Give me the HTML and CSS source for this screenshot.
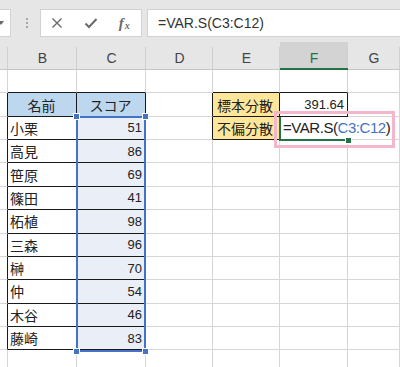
FILE: index.html
```html
<!DOCTYPE html>
<html lang="ja">
<head>
<meta charset="utf-8">
<title>VAR.S</title>
<link rel="stylesheet" href="styles.css">
</head>
<body>
<div class="app">
  <div class="toolbar">
    <div class="namebox"><span class="arrow"></span></div>
    <div class="grip"><i></i><i></i><i></i></div>
    <div class="fxbtns">
      <span class="btn"><svg width="12" height="12" viewBox="0 0 12 12"><path d="M1.5 1.5 L10.5 10.5 M10.5 1.5 L1.5 10.5" stroke="#6a6a6a" stroke-width="1.4" fill="none"/></svg></span>
      <span class="btn"><svg width="14" height="12" viewBox="0 0 14 12"><path d="M1.5 6.5 L5 10 L12.5 2" stroke="#6a6a6a" stroke-width="2" fill="none"/></svg></span>
      <span class="btn fx"><i>f</i><span class="sx">x</span></span>
    </div>
    <div class="formula">=VAR.S(C3:C12)</div>
  </div>
  <div class="sheet">
    <div class="grid cells">
      <div class="ch"></div><div class="ch">B</div><div class="ch">C</div><div class="ch">D</div><div class="ch">E</div><div class="ch sel">F</div><div class="ch">G</div>

      <div class="c"></div><div class="c bb"></div><div class="c bb"></div><div class="c"></div><div class="c bb"></div><div class="c bb"></div><div class="c"></div>

      <div class="c br"></div><div class="c br bb hd jp">名前</div><div class="c br bb hd jp">スコア</div><div class="c br"></div><div class="c br bb ye jp">標本分散</div><div class="c br bb num">391.64</div><div class="c"></div>

      <div class="c br"></div><div class="c br bb jp">小栗</div><div class="c br bb sl num">51</div><div class="c br"></div><div class="c br bb ye jp">不偏分散</div><div class="c br bb"></div><div class="c"></div>

      <div class="c br"></div><div class="c br bb jp">高見</div><div class="c br bb sl num">86</div><div class="c"></div><div class="c"></div><div class="c"></div><div class="c"></div>
      <div class="c br"></div><div class="c br bb jp">笹原</div><div class="c br bb sl num">69</div><div class="c"></div><div class="c"></div><div class="c"></div><div class="c"></div>
      <div class="c br"></div><div class="c br bb jp">篠田</div><div class="c br bb sl num">41</div><div class="c"></div><div class="c"></div><div class="c"></div><div class="c"></div>
      <div class="c br"></div><div class="c br bb jp">柘植</div><div class="c br bb sl num">98</div><div class="c"></div><div class="c"></div><div class="c"></div><div class="c"></div>
      <div class="c br"></div><div class="c br bb jp">三森</div><div class="c br bb sl num">96</div><div class="c"></div><div class="c"></div><div class="c"></div><div class="c"></div>
      <div class="c br"></div><div class="c br bb jp">榊</div><div class="c br bb sl num">70</div><div class="c"></div><div class="c"></div><div class="c"></div><div class="c"></div>
      <div class="c br"></div><div class="c br bb jp">仲</div><div class="c br bb sl num">54</div><div class="c"></div><div class="c"></div><div class="c"></div><div class="c"></div>
      <div class="c br"></div><div class="c br bb jp">木谷</div><div class="c br bb sl num">46</div><div class="c"></div><div class="c"></div><div class="c"></div><div class="c"></div>
      <div class="c br"></div><div class="c br bb jp">藤崎</div><div class="c br bb sl num">83</div><div class="c"></div><div class="c"></div><div class="c"></div><div class="c"></div>

      <div class="c"></div><div class="c"></div><div class="c"></div><div class="c"></div><div class="c"></div><div class="c"></div><div class="c"></div>
    </div>
    <div class="grid over">
      <div class="selbox"><span class="h tl"></span><span class="h tr"></span><span class="h bl"></span><span class="h brh"></span></div>
      <div class="edit">=VAR.S(<span class="ref">C3:C12</span>)<span class="caret"></span></div>
      <div class="active"><span class="fill"></span></div>
    </div>
    <div class="note"></div>
  </div>
</div>
</body>
</html>
```
FILE: styles.css
```css
html, body {
  margin: 0;
  padding: 0;
  background: #ffffff;
}
.app {
  width: 400px;
  height: 367px;
  overflow: hidden;
  font-family: "Liberation Sans", Arial, sans-serif;
  color: #222;
}
.toolbar {
  display: flex;
  align-items: flex-start;
  height: 42px;
  box-sizing: border-box;
  padding-top: 9px;
  background: #e6e6e6;
}
.namebox {
  width: 11px;
  height: 28px;
  box-sizing: border-box;
  background: #fff;
  border: 1px solid #d2d2d2;
  border-left: none;
  display: flex;
  align-items: center;
  justify-content: flex-end;
  padding-right: 6px;
}
.arrow {
  width: 0;
  height: 0;
  border-left: 3px solid transparent;
  border-right: 3px solid transparent;
  border-top: 4px solid #6a6a6a;
}
.grip {
  margin-left: 14px;
  width: 3px;
  height: 28px;
  display: flex;
  flex-direction: column;
  align-items: center;
  justify-content: center;
  gap: 2px;
}
.grip i {
  display: block;
  width: 2px;
  height: 2px;
  background: #a8a8a8;
}
.fxbtns {
  margin-left: 12px;
  width: 102px;
  height: 28px;
  box-sizing: border-box;
  background: #fff;
  border: 1px solid #d2d2d2;
  display: flex;
}
.btn {
  width: 34px;
  display: flex;
  align-items: center;
  justify-content: center;
}
.btn:first-child { margin-left: -1px; }
.fx {
  font-family: "Liberation Serif", serif;
  font-style: italic;
  color: #6a6a6a;
  font-size: 15px;
  font-weight: bold;
}
.fx .sx {
  font-size: 10px;
  margin-top: 5px;
  margin-left: 1px;
}
.formula {
  margin-left: 5px;
  flex: 1;
  height: 28px;
  box-sizing: border-box;
  background: #fff;
  border: 1px solid #d2d2d2;
  border-right: none;
  padding-left: 10px;
  font-size: 14px;
  line-height: 26px;
  color: #333;
}
.sheet {
  position: relative;
  display: grid;
}
.grid {
  grid-area: 1 / 1;
  display: grid;
  grid-template-columns: 8px 69px 69px 67px 67px 68px 1fr;
  grid-template-rows: 28px repeat(13, 23.36px);
}
.over {
  pointer-events: none;
  z-index: 2;
}
.ch {
  background: #e6e6e6 linear-gradient(#cfcfcf, #cfcfcf) no-repeat right bottom / 1px 22px;
  border-bottom: 1px solid #c6c6c6;
  display: flex;
  align-items: center;
  justify-content: center;
  padding-top: 5px;
  box-sizing: border-box;
  font-size: 14px;
  color: #444;
}
.ch.sel {
  background-color: #d3d3d3;
  color: #217346;
  border-bottom: 2px solid #217346;
}
.c {
  box-sizing: border-box;
  border-right: 1px solid #d6d6d6;
  border-bottom: 1px solid #d6d6d6;
  display: flex;
  align-items: center;
  padding: 0 3px;
  font-size: 13px;
  color: #222;
  white-space: nowrap;
}
.c.br { border-right-color: #1a1a1a; }
.c.bb { border-bottom-color: #1a1a1a; }
.jp {
  font-family: "Noto Sans CJK JP", sans-serif;
  font-size: 14px;
  padding-left: 2px;
}
.num { justify-content: flex-end; }
.hd {
  background: #bdd7ee;
  justify-content: center;
}
.ye {
  background: #ffe699;
  padding-left: 4px;
}
.sl { background: #e9eef7; }
.selbox {
  grid-column: 3;
  grid-row: 4 / 14;
  margin: -1px 0 -2px -1px;
  border: 2px solid #4472c4;
  position: relative;
}
.h {
  position: absolute;
  width: 5px;
  height: 5px;
  background: #4472c4;
  outline: 1px solid #ffffff;
}
.h.tl { left: -4px; top: -4px; }
.h.tr { right: -4px; top: -4px; }
.h.bl { left: -4px; bottom: -4px; }
.h.brh { right: -4px; bottom: -4px; }
.edit {
  grid-column: 6 / 8;
  grid-row: 4;
  justify-self: start;
  width: 110px;
  margin-bottom: 1px;
  margin-left: 1px;
  background: #fff;
  display: flex;
  align-items: center;
  padding-left: 2px;
  box-sizing: border-box;
  font-size: 15px;
  letter-spacing: -0.45px;
  color: #222;
  white-space: nowrap;
}
.ref { color: #4472c4; }
.caret {
  display: inline-block;
  width: 1px;
  height: 17px;
  background: #111;
  margin-left: 2px;
}
.active {
  grid-column: 6;
  grid-row: 4;
  margin: 0 0 -1px -1px;
  border-left: 2px solid #217346;
  border-bottom: 2px solid #217346;
  position: relative;
}
.fill {
  position: absolute;
  right: -3px;
  bottom: -4px;
  width: 5px;
  height: 5px;
  background: #217346;
  outline: 1px solid #fff;
}
.note {
  position: absolute;
  left: 274px;
  top: 69px;
  width: 121px;
  height: 37px;
  box-sizing: border-box;
  border: 3px solid #f4b6ca;
  z-index: 5;
  pointer-events: none;
}
```
